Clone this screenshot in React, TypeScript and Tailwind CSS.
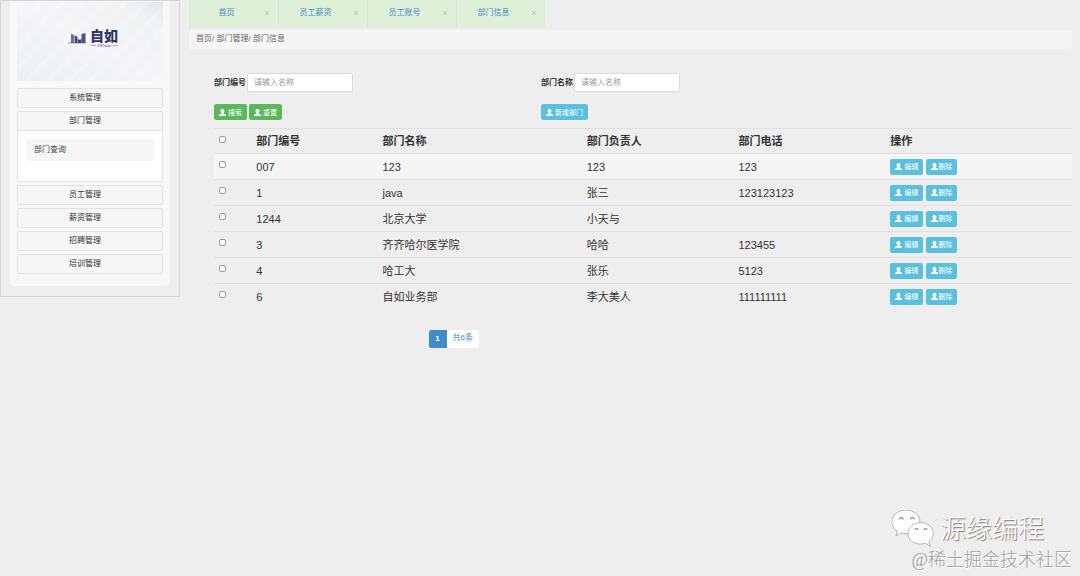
import React, { useState } from "react";

const departments = [
  { id: "007", name: "123", leader: "123", phone: "123" },
  { id: "1", name: "java", leader: "张三", phone: "123123123" },
  { id: "1244", name: "北京大学", leader: "小天与", phone: "" },
  { id: "3", name: "齐齐哈尔医学院", leader: "哈哈", phone: "123455" },
  { id: "4", name: "哈工大", leader: "张乐", phone: "5123" },
  { id: "6", name: "自如业务部", leader: "李大美人", phone: "111111111" },
];

const menu = ["系统管理", "部门管理", "员工管理", "薪资管理", "招聘管理", "培训管理"];
const tabs = ["首页", "员工薪资", "员工账号", "部门信息"];

function UserIcon() {
  return (
    <svg viewBox="0 0 14 14" className="size-[7px] shrink-0" fill="currentColor" aria-hidden="true">
      <path d="M7 0C4.300 0 3 1.700 3.100 4c0 1.600.8 3.200 1.900 4.100v1L1 10.800c-.7.400-1 1.200-1 3.200h14c0-2-.3-2.800-1-3.200L9 9.100v-1c1.100-.9 1.900-2.500 1.900-4.100C11 1.700 9.700 0 7 0z" />
    </svg>
  );
}

function ActionButton({ label, color, tight }: { label: string; color: "green" | "blue"; tight?: boolean }) {
  return (
    <button
      type="button"
      className={`inline-flex h-4 items-center rounded-xs px-[5px] text-[7px] leading-none text-white ${
        color === "green" ? "bg-[#5cb85c]" : "bg-[#5bc0de]"
      } ${tight ? "gap-0" : "gap-0.5"}`}
    >
      <UserIcon />
      {label}
    </button>
  );
}

function SearchField({ id, label }: { id: string; label: string }) {
  return (
    <div className="flex items-center gap-px">
      <label htmlFor={id} className="w-8 text-[8px] font-bold whitespace-nowrap">
        {label}
      </label>
      <input
        id={id}
        type="text"
        placeholder="请输入名称"
        className="h-[19px] w-[106px] rounded-xs border border-[#dcdcdc] bg-white px-1.5 text-[8px] placeholder:text-[#999]"
      />
    </div>
  );
}

function Logo() {
  return (
    <svg viewBox="0 0 146 79" className="block w-full" role="img" aria-label="自如">
      <defs>
        <linearGradient id="sheen" x1="0" y1="1" x2="1" y2="0">
          <stop offset="0" stopColor="#eceef2" />
          <stop offset=".5" stopColor="#f5f5f7" />
          <stop offset=".85" stopColor="#f1f2f4" />
          <stop offset="1" stopColor="#e4e5e9" />
        </linearGradient>
        <pattern id="stripes" width="15" height="15" patternUnits="userSpaceOnUse" patternTransform="rotate(45)">
          <rect width="5" height="15" fill="#fff" opacity=".2" />
        </pattern>
      </defs>
      <rect width="146" height="79" fill="url(#sheen)" />
      <rect width="146" height="79" fill="url(#stripes)" />
      <path d="M51 41h18" stroke="#6b7295" strokeWidth=".7" />
      <path d="M54 31.500l3.500 2V41H54z" fill="#6b7295" />
      <path d="M58 33.500l2.500 1.500v6H58zM61 37l2 1 1.500-1.500V41H61z" fill="#3c4273" />
      <path d="M64.500 32l4-1v10h-4z" fill="#4b527f" />
      <text x="73" y="39" fontSize="14" fontWeight="900" fill="#303468" fontFamily="Noto Sans CJK SC, sans-serif">
        自如
      </text>
      <path d="M74 43.500h5M96 43.500h5" stroke="#6b7295" strokeWidth=".6" />
      <text x="80" y="45" fontSize="4" fontStyle="italic" fill="#4b527f" fontFamily="Liberation Sans, sans-serif">
        ZIRoom
      </text>
    </svg>
  );
}

function Sidebar() {
  const [open, setOpen] = useState(1);
  return (
    <aside className="w-45 shrink-0 border border-[#d4d4d4] px-[9px] pb-2.5">
      <div className="rounded-b-sm bg-[#f8f8f8] px-[7px] pt-px pb-3">
        <Logo />
        <nav className="mt-[7px] flex flex-col gap-[3px]">
          {menu.map((item, index) => (
            <div key={item} className="rounded-xs border border-[#e2e2e2] bg-[#f6f6f6]">
              <button
                type="button"
                onClick={() => setOpen(index)}
                className="block h-[18px] w-full pr-2.5 text-center text-[8px] leading-[18px] text-[#333]"
              >
                {item}
              </button>
              {open === index && index === 1 && (
                <div className="border-t border-[#e2e2e2] bg-white px-2 pt-2 pb-5">
                  <a href="#query" className="block rounded-xs bg-[#f6f6f6] px-2 text-[8px] leading-[22px] text-[#444]">
                    部门查询
                  </a>
                </div>
              )}
            </div>
          ))}
        </nav>
      </div>
    </aside>
  );
}

function RowCheckbox({ label }: { label: string }) {
  return (
    <input
      type="checkbox"
      aria-label={label}
      className="mt-[7px] block size-[7px] appearance-none rounded-[2px] border border-[#999] bg-white checked:bg-[#428bca]"
    />
  );
}

function DepartmentTable() {
  return (
    <table className="mt-2 w-full table-fixed border-collapse text-left text-[11px] leading-4">
      <colgroup>
        <col className="w-[4%]" />
        <col className="w-[14.7%]" />
        <col className="w-[23.8%]" />
        <col className="w-[17.7%]" />
        <col className="w-[17.7%]" />
        <col />
      </colgroup>
      <thead>
        <tr className="h-[25px] border-t border-[#e0e0e0]">
          <th className="px-[5px] align-top">
            <RowCheckbox label="全选" />
          </th>
          <th className="px-2">部门编号</th>
          <th className="px-2">部门名称</th>
          <th className="px-2">部门负责人</th>
          <th className="px-2">部门电话</th>
          <th className="px-2">操作</th>
        </tr>
      </thead>
      <tbody>
        {departments.map((row, index) => (
          <tr key={row.id} className={`h-[26px] border-t border-[#e0e0e0] ${index === 0 ? "bg-[#f5f5f5]" : ""}`}>
            <td className="px-[5px] align-top">
              <RowCheckbox label={row.id} />
            </td>
            <td className="px-2">{row.id}</td>
            <td className="px-2">{row.name}</td>
            <td className="px-2">{row.leader}</td>
            <td className="px-2">{row.phone}</td>
            <td className="px-2">
              <div className="flex gap-[3px]">
                <ActionButton label="编辑" color="blue" />
                <ActionButton label="删除" color="blue" tight />
              </div>
            </td>
          </tr>
        ))}
      </tbody>
    </table>
  );
}

function Watermark() {
  return (
    <div className="pointer-events-none absolute right-2 bottom-1 flex flex-col items-end">
      <div className="mr-7 flex items-center gap-1.5">
        <svg viewBox="0 0 42 38" className="h-[38px] w-[42px]" fill="#fff" stroke="#a5a5a5" strokeWidth=".8" aria-hidden="true">
          <path d="M14 0C6 0 0 5 0 12c0 4 2 7 5 9l-1 5 5-3c2 .6 4 .8 6 .8 7-.2 13-5 13-11.800C28 5 22 0 14 0z" />
          <path d="M28.500 12.500c-7 0-12.500 4.800-12.500 11S21.500 34 28.500 34c1.700 0 3.300-.2 4.700-.7l5.300 3.200-1.700-4.800c2.900-2 4.600-4.900 4.600-8.200 0-6.200-5.900-11-12.900-11z" />
          <g fill="none" stroke="#888" strokeWidth="1.200">
            <path d="M7.500 9.500a1.800 1.800 0 013.600 0M18.500 9.500a1.800 1.800 0 013.600 0M23 20a1.500 1.500 0 013 0M32 20a1.500 1.500 0 013 0" />
          </g>
        </svg>
        <span className="text-[26px] leading-9 font-light text-white [text-shadow:1px_1px_1px_#777]">源缘编程</span>
      </div>
      <span className="font-['Liberation_Serif','Noto_Sans_CJK_SC',serif] text-[18px] leading-6 font-light whitespace-nowrap text-[#a0a0a0] [text-shadow:1px_1px_0_#fff]">
        @稀土掘金技术社区
      </span>
    </div>
  );
}

export default function App() {
  const [active, setActive] = useState(3);
  return (
    <div className="relative flex min-h-screen items-start gap-[9px] bg-[#eee] pr-2 font-['Liberation_Sans','Noto_Sans_CJK_SC',sans-serif] text-[#333]">
      <Sidebar />
      <main className="min-w-0 flex-1">
        <div className="flex">
          {tabs.map((tab, index) => (
            <div key={tab} className="flex h-7 w-[89px] items-center border-l border-[#d3ead0] bg-[#dff0d8] pr-[7px] pb-0.5">
              <button
                type="button"
                aria-current={active === index}
                onClick={() => setActive(index)}
                className="flex-1 text-center text-[8px] text-[#428bca]"
              >
                {tab}
              </button>
              <button type="button" aria-label={`关闭${tab}`} className="w-2 text-[9px] leading-none text-[#b4c4b0]">
                ×
              </button>
            </div>
          ))}
        </div>
        <nav aria-label="位置" className="mt-0.5 h-[19px] rounded-xs bg-[#f5f5f5] px-[7px] text-[8px] leading-[18px] text-[#666]">
          首页/ 部门管理/ 部门信息
        </nav>
        <section className="pt-6 pl-[25px]">
          <form className="grid grid-cols-[38.1%_1fr] gap-y-3" onSubmit={(e) => e.preventDefault()}>
            <SearchField id="dept-no" label="部门编号" />
            <SearchField id="dept-name" label="部门名称" />
            <div className="flex gap-0.5">
              <ActionButton label="搜索" color="green" />
              <ActionButton label="重置" color="green" />
            </div>
            <div className="flex">
              <ActionButton label="新增部门" color="blue" />
            </div>
          </form>
          <DepartmentTable />
          <div className="mt-5 ml-[25%] flex text-[8px]">
            <button type="button" aria-current="page" className="h-[18px] w-[18px] rounded-l-xs bg-[#428bca] font-bold text-white">
              1
            </button>
            <span className="h-[18px] rounded-r-xs bg-white px-1.5 leading-4 text-[#428bca]">共6条</span>
          </div>
        </section>
      </main>
      <Watermark />
    </div>
  );
}
